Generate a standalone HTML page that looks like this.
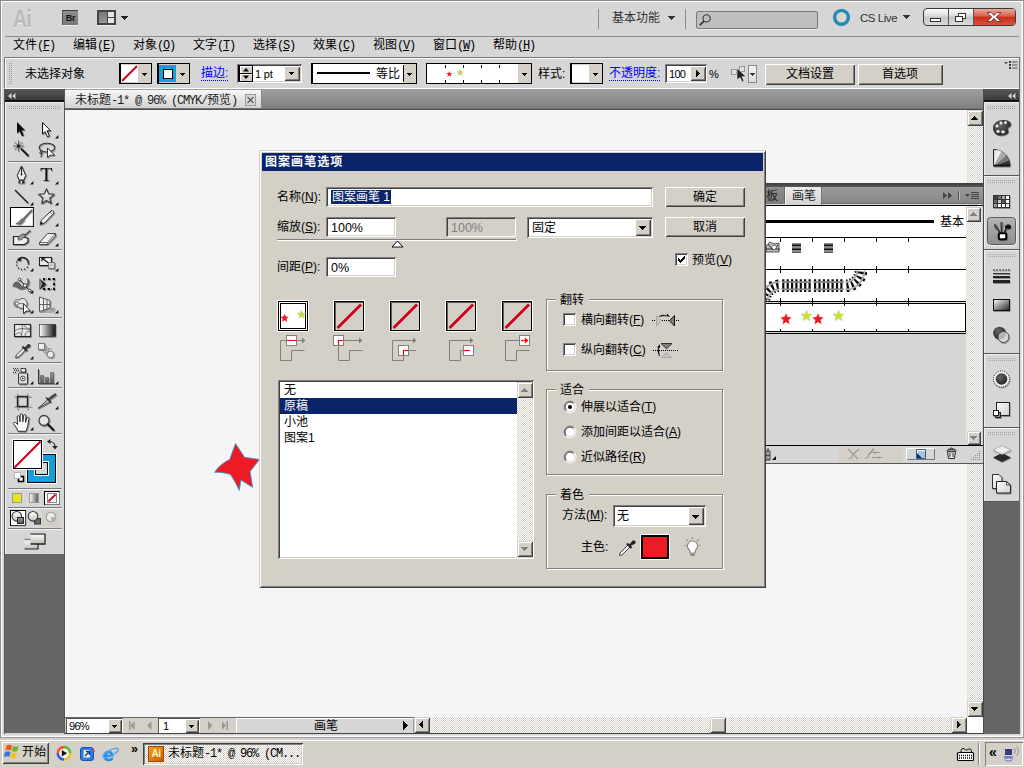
<!DOCTYPE html>
<html lang="zh"><head><meta charset="utf-8"><title>Adobe Illustrator</title>
<style>
*{box-sizing:border-box;margin:0;padding:0}
html,body{width:1024px;height:768px;overflow:hidden}
body{position:relative;background:#d6d6d6;font-family:"Liberation Sans","Noto Sans CJK SC",sans-serif;font-size:12px;color:#000}
div,svg.a{position:absolute}
.t{white-space:nowrap;height:12px;line-height:12px;font-size:12px;font-family:"Liberation Sans","Noto Sans CJK SC",sans-serif}
.t u{text-decoration:underline;text-underline-offset:1px}
.m{font-family:"Liberation Mono","Noto Sans CJK SC",monospace;font-size:12px;letter-spacing:-1.2px}
.b{font-weight:bold}
.lnk{color:#00f;border-bottom:1px dotted #00f;height:14px}
.face{background:#d4d0c8}
.btn{background:#d4d0c8;box-shadow:inset 1px 1px #fff,inset -1px -1px #404040,inset 2px 2px #d4d0c8,inset -2px -2px #808080}
.sbtn{background:#d4d0c8;box-shadow:inset 1px 1px #d4d0c8,inset -1px -1px #404040,inset 2px 2px #fff,inset -2px -2px #808080}
.sunk{background:#fff;box-shadow:inset 1px 1px #808080,inset -1px -1px #fff,inset 2px 2px #404040,inset -2px -2px #d4d0c8}
.chk{background:conic-gradient(#fff 25%,#d4d0c8 0 50%,#fff 0 75%,#d4d0c8 0) 0 0/2px 2px}
.grp{border:1px solid #808080;box-shadow:inset 1px 1px #fff,1px 1px #fff}
</style></head>
<body>
<!-- sec_frame -->
<div style="left:0px;top:0px;width:1024px;height:738px;border:1px solid #8c8c8c;border-right-color:#9a9a9a;border-bottom-color:#9a9a9a;box-shadow:inset 1px 1px #fff,inset -1px -1px #fff,inset -2px -2px #e4e4e4"></div>
<div style="left:13px;top:5px;font-size:23.5px;font-weight:bold;line-height:28px;height:28px;color:#bbb;-webkit-text-stroke:.4px #bbb;text-shadow:0 1px 0 #fff;transform:scaleX(.82);transform-origin:0 0;letter-spacing:-.5px">Ai</div>
<div style="left:62px;top:10px;width:16px;height:15px;background:linear-gradient(#8e8e8e,#787878);border-top:1px solid #3c3c3c;border-left:1px solid #555;box-shadow:0 1px #eee;font-size:9px;font-weight:bold;line-height:14px;text-align:center;color:#111;letter-spacing:-.3px">Br</div>
<div style="left:97px;top:10px;width:19px;height:15px;background:#444;box-shadow:0 1px #eee"></div>
<div style="left:99px;top:12px;width:8px;height:11px;background:linear-gradient(#777,#999)"></div>
<div style="left:108px;top:12px;width:6px;height:5px;background:#e6e6e6"></div>
<div style="left:108px;top:18px;width:6px;height:5px;background:#e6e6e6"></div>
<svg class="a" style="left:121px;top:16px" width="7" height="4" shape-rendering="crispEdges"><path d="M0 0h7v1h-7zM1 1h5v1h-5zM2 2h3v1h-3zM3 3h1v1h-1z" fill="#222"/></svg>
<div style="left:598px;top:9px;width:1px;height:20px;background:#8a8a8a"></div>
<div style="left:685px;top:9px;width:1px;height:20px;background:#8a8a8a"></div>
<div class="t" style="left:612px;top:12px;color:#333" aria-label="基本功能">基本功能</div>
<svg class="a" style="left:668px;top:16px" width="7" height="4" shape-rendering="crispEdges"><path d="M0 0h7v1h-7zM1 1h5v1h-5zM2 2h3v1h-3zM3 3h1v1h-1z" fill="#333"/></svg>
<div style="left:696px;top:11px;width:122px;height:18px;background:#bfbfbf;border:1px solid #7a7a7a;border-radius:2px;box-shadow:0 1px #eee"></div>
<svg class="a" style="left:698px;top:13px" width="16" height="14" viewBox="0 0 16 14"><circle cx="8.6" cy="5.4" r="3.6" fill="none" stroke="#333" stroke-width="1.1"/><path d="M6 8.2L1.8 12.2" stroke="#333" stroke-width="1.6"/></svg>
<svg class="a" style="left:832px;top:8px" width="20" height="20" viewBox="0 0 20 20"><circle cx="9.5" cy="9.3" r="6.9" fill="none" stroke="#2489b4" stroke-width="3.4"/></svg>
<div class="t" style="left:860px;top:12px;color:#333;font-size:11.5px;letter-spacing:-.45px">CS Live</div>
<svg class="a" style="left:903px;top:15px" width="7" height="4" shape-rendering="crispEdges"><path d="M0 0h7v1h-7zM1 1h5v1h-5zM2 2h3v1h-3zM3 3h1v1h-1z" fill="#333"/></svg>
<div style="left:923px;top:8px;width:93px;height:18px;border:1px solid #3a3a3a;border-radius:4px;background:linear-gradient(#fdfdfd,#d9d9d9 45%,#c4c4c4 50%,#dcdcdc);overflow:hidden"><div style="left:24px;top:0;width:1px;height:16px;background:#555"></div><div style="left:49px;top:0;width:1px;height:16px;background:#555"></div><div style="left:50px;top:0;width:41px;height:16px;background:linear-gradient(#e8a89c,#d9604c 45%,#c4301c 50%,#d9503c)"></div></div>
<svg class="a" style="left:923px;top:8px" width="93" height="18" viewBox="0 0 93 18"><rect x="7.5" y="10.5" width="10" height="3" fill="#fff" stroke="#333"/><rect x="35.5" y="5.5" width="7" height="5" fill="#fff" stroke="#333"/><rect x="32.500" y="8.5" width="7" height="5" fill="#fff" stroke="#333"/><path d="M64 4.500h4l3 3 3-3h4l-4.800 4.500 4.800 4.500h-4l-3-3-3 3h-4l4.800-4.500z" fill="#fff" stroke="#5a2018" stroke-width=".8"/></svg>
<div style="left:5px;top:36px;width:1014px;height:1px;background:#8c8c8c"></div>
<div class="t" style="left:13px;top:39px;" aria-label="文件(F)">文件<span class="m">(<u>F</u>)</span></div>
<div class="t" style="left:73px;top:39px;" aria-label="编辑(E)">编辑<span class="m">(<u>E</u>)</span></div>
<div class="t" style="left:133px;top:39px;" aria-label="对象(O)">对象<span class="m">(<u>O</u>)</span></div>
<div class="t" style="left:193px;top:39px;" aria-label="文字(T)">文字<span class="m">(<u>T</u>)</span></div>
<div class="t" style="left:253px;top:39px;" aria-label="选择(S)">选择<span class="m">(<u>S</u>)</span></div>
<div class="t" style="left:313px;top:39px;" aria-label="效果(C)">效果<span class="m">(<u>C</u>)</span></div>
<div class="t" style="left:373px;top:39px;" aria-label="视图(V)">视图<span class="m">(<u>V</u>)</span></div>
<div class="t" style="left:433px;top:39px;" aria-label="窗口(W)">窗口<span class="m">(<u>W</u>)</span></div>
<div class="t" style="left:493px;top:39px;" aria-label="帮助(H)">帮助<span class="m">(<u>H</u>)</span></div>
<div style="left:4px;top:57px;width:1016px;height:32px;border:1px solid #777;border-bottom-color:#fff;box-shadow:inset 1px 1px #fff"></div>
<div style="left:8px;top:63px;width:4px;height:22px;background:conic-gradient(#9a9a9a 25%,transparent 0) 0 0/2px 2px"></div>
<div class="t" style="left:25px;top:68px;" aria-label="未选择对象">未选择对象</div>
<div style="left:119px;top:63px;width:33px;height:21px;background:#d4d0c8;border:1px solid #000;border-left-width:2px"><div style="left:0;top:1px;width:17px;height:17px;background:#fff"></div><svg class="a" style="left:0;top:1px" width="17" height="17"><path d="M1 16L16 1" stroke="#d0021b" stroke-width="2"/></svg></div>
<svg class="a" style="left:142px;top:73px" width="5" height="3" shape-rendering="crispEdges"><path d="M0 0h5v1h-5zM1 1h3v1h-3zM2 2h1v1h-1z" fill="#000"/></svg>
<div style="left:157px;top:63px;width:33px;height:21px;background:#d4d0c8;border:1px solid #000;border-left-width:2px"><div style="left:0;top:1px;width:17px;height:17px;background:#189fdb"></div><div style="left:4px;top:5px;width:10px;height:10px;background:#fff;border:1.5px solid #000"></div></div>
<svg class="a" style="left:180px;top:73px" width="5" height="3" shape-rendering="crispEdges"><path d="M0 0h5v1h-5zM1 1h3v1h-3zM2 2h1v1h-1z" fill="#000"/></svg>
<div class="t lnk" style="left:201px;top:67px;" aria-label="描边:">描边:</div>
<div class="sunk" style="left:237px;top:64px;width:65px;height:19px;"></div>
<div style="left:238px;top:65px;width:15px;height:17px;background:#000"></div>
<div style="left:240px;top:66px;width:12px;height:7px;background:#d4d0c8;box-shadow:inset 1px 1px #fff"></div>
<div style="left:240px;top:74px;width:12px;height:7px;background:#d4d0c8;box-shadow:inset 1px 1px #fff"></div>
<svg class="a" style="left:240px;top:66px" width="12" height="15"><path d="M3 5.500L6 2l3 3.500zM3 9.500L6 13l3-3.500z" fill="#000"/></svg>
<div class="t" style="left:255px;top:68px;font-size:11px;letter-spacing:-.2px">1 pt</div>
<div class="btn" style="left:284px;top:66px;width:16px;height:15px;"></div>
<svg class="a" style="left:289px;top:72px" width="5" height="3" shape-rendering="crispEdges"><path d="M0 0h5v1h-5zM1 1h3v1h-3zM2 2h1v1h-1z" fill="#000"/></svg>
<div style="left:311px;top:63px;width:106px;height:21px;background:#fff;border:1px solid #000;border-left-width:2px"></div>
<div style="left:317px;top:72px;width:53px;height:2px;background:#000"></div>
<div class="t" style="left:376px;top:68px;" aria-label="等比">等比</div>
<div style="left:403px;top:65px;width:1px;height:17px;background:#000"></div>
<div class="face" style="left:404px;top:64px;width:12px;height:19px;"></div>
<svg class="a" style="left:407px;top:73px" width="5" height="3" shape-rendering="crispEdges"><path d="M0 0h5v1h-5zM1 1h3v1h-3zM2 2h1v1h-1z" fill="#000"/></svg>
<div style="left:426px;top:63px;width:106px;height:21px;background:#fff;border:1px solid #000"></div>
<div style="left:445px;top:65px;width:1px;height:3px;background:#000"></div>
<div style="left:445px;top:80px;width:1px;height:3px;background:#000"></div>
<div style="left:463px;top:65px;width:1px;height:3px;background:#000"></div>
<div style="left:463px;top:80px;width:1px;height:3px;background:#000"></div>
<div style="left:481px;top:65px;width:1px;height:3px;background:#000"></div>
<div style="left:481px;top:80px;width:1px;height:3px;background:#000"></div>
<div style="left:499px;top:65px;width:1px;height:3px;background:#000"></div>
<div style="left:499px;top:80px;width:1px;height:3px;background:#000"></div>
<div class="face" style="left:518px;top:64px;width:13px;height:19px;"></div>
<svg class="a" style="left:522px;top:73px" width="5" height="3" shape-rendering="crispEdges"><path d="M0 0h5v1h-5zM1 1h3v1h-3zM2 2h1v1h-1z" fill="#000"/></svg>
<svg class="a" style="left:444px;top:69px" width="11" height="11"><polygon points="5.3,2.0 6.1,4.0 8.3,4.2 6.7,5.6 7.2,7.8 5.3,6.6 3.4,7.8 3.9,5.6 2.3,4.2 4.5,4.0" fill="#e8222a"/></svg>
<svg class="a" style="left:455px;top:67px" width="11" height="11"><polygon points="5.2,2.6 6.0,4.6 8.2,4.8 6.6,6.2 7.1,8.4 5.2,7.2 3.3,8.4 3.8,6.2 2.2,4.8 4.4,4.6" fill="#cfd82a" stroke="#9cc8b0" stroke-width=".5"/></svg>
<div class="t" style="left:538px;top:68px;" aria-label="样式:">样式:</div>
<div style="left:570px;top:63px;width:33px;height:21px;background:#d4d0c8;border:1px solid #000;border-left-width:2px"><div style="left:0;top:1px;width:17px;height:17px;background:#fff"></div></div>
<svg class="a" style="left:593px;top:73px" width="5" height="3" shape-rendering="crispEdges"><path d="M0 0h5v1h-5zM1 1h3v1h-3zM2 2h1v1h-1z" fill="#000"/></svg>
<div class="t lnk" style="left:609px;top:67px;" aria-label="不透明度:">不透明度:</div>
<div class="sunk" style="left:665px;top:64px;width:42px;height:19px;"></div>
<div class="t" style="left:669px;top:68px;font-size:11px;letter-spacing:-.7px">100</div>
<div class="btn" style="left:690px;top:66px;width:16px;height:15px;"></div>
<svg class="a" style="left:696px;top:70px" width="4" height="7" shape-rendering="crispEdges"><path d="M0 0v7h1v-7zM1 1v5h1v-5zM2 2v3h1v-3zM3 3v1h1v-1z" fill="#000"/></svg>
<div class="t" style="left:709px;top:68px;font-size:11px">%</div>
<svg class="a" style="left:730px;top:64px" width="18" height="20" viewBox="0 0 18 20"><rect x="1.500" y="5.500" width="5" height="5" fill="#e4e0d8" stroke="#555" stroke-dasharray="1 1"/><rect x="9.500" y="2.500" width="5" height="5" fill="#e4e0d8" stroke="#555" stroke-dasharray="1 1"/><path d="M7 4v12l3-2.500 2 4.500 2-1-2-4.300h4z" fill="#222" stroke="#eee" stroke-width=".6"/></svg>
<div style="left:748px;top:65px;width:9px;height:18px;background:linear-gradient(#f4f4f4,#dcdcdc);border:1px solid #8a8a8a"></div>
<svg class="a" style="left:750px;top:73px" width="5" height="3" shape-rendering="crispEdges"><path d="M0 0h5v1h-5zM1 1h3v1h-3zM2 2h1v1h-1z" fill="#333"/></svg>
<div class="btn" style="left:765px;top:64px;width:90px;height:21px;"></div>
<div class="t" style="left:786px;top:68px;" aria-label="文档设置">文档设置</div>
<div class="btn" style="left:858px;top:64px;width:85px;height:21px;"></div>
<div class="t" style="left:882px;top:68px;" aria-label="首选项">首选项</div>
<svg class="a" style="left:1002px;top:60px" width="16" height="10" viewBox="0 0 16 10"><path d="M2 2h4L4 4.500z" fill="#555"/><path d="M7 1h2v2h-2zM7 4h2v2h-2zM7 7h2v2h-2z" fill="#3a3a3a"/><path d="M10 2h5.500M10 5h5.500M10 8h5.500" stroke="#555" stroke-width="1.200"/></svg>
<div style="left:65px;top:89px;width:918px;height:19px;background:linear-gradient(#a0a0a0,#808080)"></div>
<div style="left:65px;top:108px;width:918px;height:2px;background:linear-gradient(#707070 50%,#505050 0)"></div>
<div style="left:65px;top:90px;width:197px;height:18px;background:linear-gradient(#f6f6f6,#d2d2d2);border-right:1px solid #8a8a8a"></div>
<div class="t" style="left:75px;top:94px;color:#222" aria-label="未标题-1* @ 96% (CMYK/预览)">未标题<span class="m">-1* @ 96% (CMYK/</span>预览<span class="m">)</span></div>
<div style="left:245px;top:94px;width:11px;height:12px;background:#d8d8d8;border:1px solid #9a9a9a"><svg class="a" style="left:0;top:0" width="9" height="10"><path d="M1.500 2l6 6M7.500 2l-6 6" stroke="#555" stroke-width="1.100"/></svg></div>
<div style="left:65px;top:110px;width:902px;height:607px;background:#f5f5f5"></div>
<div style="left:64px;top:89px;width:1px;height:645px;background:#555"></div>
<svg class="a" style="left:210px;top:438px" width="56" height="58" viewBox="210 438 56 58"><path d="M235.500 443.500L244.600 457.300C249 458 254 458.500 259.500 459.500L250.100 471.500L252.700 487.400L241 480.100L239.200 490.600C238 488 237 485 230.500 474.600C226 473 220 472 214.600 472.400C218 467 224 462 229.600 459.600Z" fill="#ed1c24" stroke="#2a9fd8" stroke-width=".8" stroke-linejoin="round"/></svg>
<div class="chk" style="left:967px;top:110px;width:16px;height:607px;"></div>
<div class="sbtn" style="left:967px;top:110px;width:16px;height:16px;"></div>
<svg class="a" style="left:971px;top:116px" width="7" height="4" shape-rendering="crispEdges"><path d="M0 3h7v1h-7zM1 2h5v1h-5zM2 1h3v1h-3zM3 0h1v1h-1z" fill="#000"/></svg>
<div class="sbtn" style="left:967px;top:701px;width:16px;height:16px;"></div>
<svg class="a" style="left:971px;top:707px" width="7" height="4" shape-rendering="crispEdges"><path d="M0 0h7v1h-7zM1 1h5v1h-5zM2 2h3v1h-3zM3 3h1v1h-1z" fill="#000"/></svg>
<div style="left:967px;top:717px;width:16px;height:16px;background:#fff"></div>
<div class="face" style="left:65px;top:717px;width:902px;height:17px;border-top:1px solid #666"></div>
<div style="left:65px;top:733px;width:955px;height:1px;background:#444"></div>
<div class="sunk" style="left:66px;top:718px;width:57px;height:15px;box-shadow:inset 1px 1px #555,inset -1px -1px #fff"></div>
<div class="t" style="left:69px;top:720px;font-size:11px;letter-spacing:-.7px">96%</div>
<div class="btn" style="left:108px;top:719px;width:14px;height:14px;"></div>
<svg class="a" style="left:112px;top:725px" width="5" height="3" shape-rendering="crispEdges"><path d="M0 0h5v1h-5zM1 1h3v1h-3zM2 2h1v1h-1z" fill="#000"/></svg>
<svg class="a" style="left:124px;top:718px" width="112" height="15" viewBox="0 0 112 15"><path d="M5 3h1.500v9h-1.500zM10.500 3v9l-4-4.500zM27.500 3v9l-4.500-4.500z" fill="#999"/><path d="M84 3v9l4.500-4.500zM98 3v9l4-4.500zM102.500 3h1.500v9h-1.500z" fill="#999"/></svg>
<div class="sunk" style="left:158px;top:718px;width:42px;height:15px;box-shadow:inset 1px 1px #555,inset -1px -1px #fff"></div>
<div class="t" style="left:163px;top:720px;font-size:11px">1</div>
<div class="btn" style="left:185px;top:719px;width:14px;height:14px;"></div>
<svg class="a" style="left:189px;top:725px" width="5" height="3" shape-rendering="crispEdges"><path d="M0 0h5v1h-5zM1 1h3v1h-3zM2 2h1v1h-1z" fill="#000"/></svg>
<div style="left:236px;top:718px;width:178px;height:15px;background:#d6d6d6;box-shadow:inset 1px 1px #fff,inset -1px 0 #999"></div>
<div class="t" style="left:314px;top:720px;" aria-label="画笔">画笔</div>
<svg class="a" style="left:403px;top:721px" width="5" height="9" shape-rendering="crispEdges"><path d="M0 0v9h1v-9zM1 1v7h1v-7zM2 2v5h1v-5zM3 3v3h1v-3zM4 4v1h1v-1z" fill="#000"/></svg>
<div class="chk" style="left:414px;top:717px;width:553px;height:16px;"></div>
<div class="sbtn" style="left:414px;top:717px;width:16px;height:16px;"></div>
<svg class="a" style="left:419px;top:721px" width="4" height="7" shape-rendering="crispEdges"><path d="M3 0v7h1v-7zM2 1v5h1v-5zM1 2v3h1v-3zM0 3v1h1v-1z" fill="#000"/></svg>
<div class="sbtn" style="left:710px;top:717px;width:16px;height:16px;"></div>
<div class="sbtn" style="left:951px;top:717px;width:16px;height:16px;"></div>
<svg class="a" style="left:957px;top:721px" width="4" height="7" shape-rendering="crispEdges"><path d="M0 0v7h1v-7zM1 1v5h1v-5zM2 2v3h1v-3zM3 3v1h1v-1z" fill="#000"/></svg>
<!-- sec_toolbox -->
<div style="left:4px;top:89px;width:60px;height:13px;background:linear-gradient(#585858,#3a3a3a 85%,#111 86%)"></div>
<div style="left:4px;top:89px;width:1px;height:645px;background:#555"></div>
<div style="left:5px;top:102px;width:59px;height:452px;background:#d6d6d6;box-shadow:inset 1px 1px #f2f2f2"></div>
<div style="left:5px;top:554px;width:59px;height:179px;background:#666"></div>
<div style="left:8px;top:106px;width:53px;height:3px;background:conic-gradient(#a2a2a2 25%,transparent 0) 0 0/2px 2px"></div>
<div style="left:8px;top:161px;width:54px;height:2px;background:linear-gradient(#7a7a7a 50%,#f4f4f4 0)"></div>
<div style="left:8px;top:249px;width:54px;height:2px;background:linear-gradient(#7a7a7a 50%,#f4f4f4 0)"></div>
<div style="left:8px;top:317px;width:54px;height:2px;background:linear-gradient(#7a7a7a 50%,#f4f4f4 0)"></div>
<div style="left:8px;top:362px;width:54px;height:2px;background:linear-gradient(#7a7a7a 50%,#f4f4f4 0)"></div>
<div style="left:8px;top:387px;width:54px;height:2px;background:linear-gradient(#7a7a7a 50%,#f4f4f4 0)"></div>
<div style="left:8px;top:433px;width:54px;height:2px;background:linear-gradient(#7a7a7a 50%,#f4f4f4 0)"></div>
<div style="left:8px;top:488px;width:54px;height:2px;background:linear-gradient(#7a7a7a 50%,#f4f4f4 0)"></div>
<div style="left:8px;top:507px;width:54px;height:2px;background:linear-gradient(#7a7a7a 50%,#f4f4f4 0)"></div>
<div style="left:8px;top:528px;width:54px;height:2px;background:linear-gradient(#7a7a7a 50%,#f4f4f4 0)"></div>
<svg class="a" style="left:0;top:0" width="70" height="560" viewBox="0 0 70 560">
<defs><linearGradient id="lgv" x1="0" y1="0" x2="0" y2="1"><stop offset="0" stop-color="#fff"/><stop offset="1" stop-color="#c4c0b8"/></linearGradient><linearGradient id="lgh" x1="0" y1="0" x2="1" y2="0"><stop offset="0" stop-color="#fff"/><stop offset="1" stop-color="#111"/></linearGradient><linearGradient id="lgb" x1="0" y1="0" x2="0" y2="1"><stop offset="0" stop-color="#999"/><stop offset="1" stop-color="#555"/></linearGradient><filter id="sh" x="-20%" y="-20%" width="150%" height="150%"><feDropShadow dx=".8" dy="1" stdDeviation=".6" flood-color="#000" flood-opacity=".35"/></filter></defs>
<path d="M11.500 93v6l-3.500-3zM15.500 93v6l-3.500-3z" fill="#d0d0d0"/>
<g filter="url(#sh)">
<path d="M17 122v11.500l2.600-2.400 2.300 5.200 2-.9-2.300-5.100h3.600z" fill="#111"/>
<path d="M42.5 122.5v11.500l2.600-2.400 2.300 5.200 2-.9-2.300-5.100h3.600z" fill="#fff" stroke="#111" stroke-width="1"/>
<path d="M18.500 140.500v11M13 146h11M14.600 142.100l7.800 7.800M22.400 142.100l-7.800 7.800" stroke="#444" stroke-width=".8"/><circle cx="18.500" cy="146" r="1.600" fill="#222"/><path d="M21 148.500l7.500 7.500" stroke="#1a1a1a" stroke-width="1.800"/>
<ellipse cx="47" cy="147.600" rx="7.800" ry="4.400" fill="none" stroke="#333" stroke-width="1.100"/><path d="M41 151c-1.500 1-1.500 3 0 3s1.500-2 0-2.500c1 2 1 4-.5 5.500" fill="none" stroke="#333" stroke-width="1"/><path d="M47.500 148v9.500l2.600-2.300h4.400z" fill="#fff" stroke="#222" stroke-width=".9"/>
<path d="M21.500 166l4.300 9.500-2 4.500h-4.600l-2-4.500z" fill="#eee" stroke="#222" stroke-width="1"/><path d="M21.500 167v7" stroke="#222" stroke-width="1"/><circle cx="21.500" cy="174.500" r="1" fill="#222"/><path d="M18.500 180.500h6v3h-6z" fill="#333"/><path d="M20.500 181v2.500h1.500v-2.500z" fill="#ddd"/>
<text x="40.300" y="181.300" font-family="Liberation Serif" font-size="19.800" fill="#111">T</text>
<path d="M15 190l13 13" stroke="#1a1a1a" stroke-width="1.300"/>
<polygon points="46.5,188.9 48.7,193.9 54.1,194.4 50.0,198.0 51.2,203.4 46.5,200.6 41.8,203.4 43.0,198.0 38.9,194.4 44.3,193.9" fill="url(#lgv)" stroke="#444" stroke-width="1.300" stroke-linejoin="round"/>
</g>
<rect x="10.500" y="207.500" width="23" height="19" fill="#fff" stroke="#000"/><path d="M11 226h22v-18" fill="none" stroke="#999" stroke-width=".6"/>
<g filter="url(#sh)">
<path d="M31.500 210.500l-8 8.500" stroke="#555" stroke-width="1.800" stroke-linecap="round"/><path d="M23.800 218.200c-1.500 0-3 1-4 2.500s-2.500 2.500-4 2.800c2 1.200 5 1 6.800-.8s2-3 1.200-4.500z" fill="#777" stroke="#555" stroke-width=".6"/>
<path d="M40 224.500l1.500-4.500 9.500-9c1.500-1 3.500.5 2.800 2.300l-9.300 9.700z" fill="#eee" stroke="#333" stroke-width="1"/><path d="M40 224.500l1-3 2 2z" fill="#111"/><path d="M50 212l2.500 2.500" stroke="#555" stroke-width=".8"/>
<path d="M13.500 236.500h9l5.500 2v3.500l-3.500 2.500h-11z" fill="#eee" stroke="#222" stroke-width="1.200"/><path d="M30.500 230.500l-6 5" stroke="#444" stroke-width="1.300"/><ellipse cx="21.500" cy="237" rx="4.200" ry="2" transform="rotate(-35 21.500 237)" fill="#999" stroke="#444" stroke-width=".8"/>
<path d="M39.500 242.500l8-9h8v2.500l-8 8.500h-8z" fill="#f0f0f0" stroke="#444" stroke-width="1" stroke-linejoin="round"/><path d="M39.500 242.500h8l8-9M47.500 242.500v2" fill="none" stroke="#444" stroke-width=".8"/>
<circle cx="22.500" cy="263.500" r="6" fill="none" stroke="#222" stroke-width="1.300" stroke-dasharray="1.200 2"/><path d="M18.500 259a6 6 0 0 1 10 4" fill="none" stroke="#222" stroke-width="1.400"/><path d="M16.500 260.500l4.500-3.500v4z" fill="#222"/>
<rect x="39.500" y="257.500" width="12" height="8" fill="#eee" stroke="#222" stroke-width="1.100"/><path d="M49 263.500l-6.500-5M42 258v3.500M42 258h3.500" stroke="#111" stroke-width="1.100" fill="none"/><rect x="48.500" y="262.500" width="6" height="6" fill="#ddd" fill-opacity=".8" stroke="#777" stroke-width="1"/>
<path d="M13 285c2-4 5-4 7-1s5 4 7 0c1-2 1-4 0-5.500c3 1 3 6 0 8.500s-6 3-9 1-4-2-5-1.500z" fill="#666" stroke="#555" stroke-width=".5"/><path d="M19.500 279.500l10.500 11.500" stroke="#222" stroke-width="1"/><circle cx="19.500" cy="279.500" r="1.300" fill="#fff" stroke="#222" stroke-width=".8"/><circle cx="25" cy="285.500" r="1.700" fill="#fff" stroke="#222" stroke-width=".8"/><circle cx="29.800" cy="290.500" r="1.300" fill="#fff" stroke="#222" stroke-width=".8"/>
<path d="M39.500 278.500v11l7-5z" fill="#222"/><path d="M39.500 278.500v11l3-5.500z" fill="#888"/><rect x="44" y="279" width="10" height="10" fill="none" stroke="#222" stroke-width=".8" stroke-dasharray="1 1"/><path d="M43 278h2v2h-2zM48 278h2v2h-2zM53 278h2v2h-2zM53 283h2v2h-2zM43 288h2v2h-2zM48 288h2v2h-2zM53 288h2v2h-2z" fill="#111"/>
<path d="M14 303.500c0-3 3-4.500 5.500-3.500 1.500-2.500 6.500-2 7 1.500 1.500 2 .5 5-2 5.500-2 2-5.500 1.500-6.500-.5-2.500.5-4-1-4-3z" fill="#e2e2e2" stroke="#555" stroke-width="1"/><circle cx="17" cy="303.500" r="1.700" fill="#fff" stroke="#333" stroke-width=".8"/><path d="M19.500 303.500h3" stroke="#222" stroke-width="1" stroke-dasharray="1 1"/><path d="M23.500 303.500v10l2.600-2.400h4.400z" fill="#fff" stroke="#222" stroke-width=".9"/>
<path d="M39.500 297l10.500 3.500v7.500l-10.500 3.500z" fill="#eee" stroke="#555" stroke-width="1"/><path d="M43.500 298.500v11.500M47 299.500v9.500M39.500 304.500h10.500" stroke="#555" stroke-width=".9"/><path d="M39.500 311.500l14.500-.5M50 308l5 .5M50 309.500l4.500.5" stroke="#888" stroke-width=".8"/>
<rect x="14.500" y="324.500" width="16" height="12" fill="#e8e8e8" stroke="#222" stroke-width="1.100"/><path d="M14.500 331c4-3 8-3 16-1M22 324.500c1 4 0 8-1 12M15 335c3-3 5-3 7 0M24 325c1 3 4 4 6.500 3M25 336c0-3 2-5 5.500-5" fill="none" stroke="#444" stroke-width=".7"/>
<rect x="39.500" y="324.500" width="16" height="12" fill="url(#lgh)" stroke="#222" stroke-width=".6"/>
<path d="M15.500 357.500l1-2.500 8-8 2 2-8 8z" fill="#eee" stroke="#333" stroke-width=".9"/><path d="M22.500 346.500l4.500 4.500" stroke="#333" stroke-width="2.200"/><path d="M25 348.500l3-3.500c1-1 2.500.5 1.500 1.500z" fill="#333" stroke="#333" stroke-width="1.400"/>
<rect x="38.500" y="343.500" width="6" height="6" fill="#eee" stroke="#777" stroke-width="1"/><path d="M46 346h1v1h-1zM48 348h1v1h-1zM46 348h1v1h-1zM44 350h1v1h-1zM46 350h1v1h-1zM42 350h1v1h-1zM44 352h1v1h-1zM46 352h1v1h-1zM48 350h1v1h-1zM50 348h1v1h-1zM46 354h1v1h-1z" fill="#777"/><circle cx="50.500" cy="354.500" r="3.300" fill="#eee" stroke="#777" stroke-width="1"/>
<rect x="18.500" y="373" width="9" height="11" rx="1" fill="#ddd" stroke="#333" stroke-width="1"/><rect x="21" y="368.500" width="4.500" height="3.500" fill="#eee" stroke="#333" stroke-width=".9"/><circle cx="22.800" cy="378.500" r="2.400" fill="#fff" stroke="#333" stroke-width=".9"/><circle cx="22.800" cy="378.500" r=".9" fill="#333"/><path d="M13 368h1v1h-1zM15 368h1v1h-1zM17 368h1v1h-1zM14 370h1v1h-1zM16 370h1v1h-1zM18 370h1v1h-1zM13 372h1v1h-1zM15 372h1v1h-1z" fill="#333"/>
<path d="M38.500 369v14.500h16" fill="none" stroke="#333" stroke-width="1"/><path d="M40.500 375.500h3v8h-3zM45.500 377.500h3v6h-3zM50.500 372.500h3v11h-3z" fill="url(#lgb)" stroke="#555" stroke-width=".6"/>
<path d="M14 396.500h17.500M14 406.500h17.500M17.500 393v17M27.500 393v17" stroke="#aaa" stroke-width=".8"/><rect x="17.500" y="396.500" width="10" height="10" fill="none" stroke="#222" stroke-width="1.400"/>
<path d="M38 408.500l10.500-9.500 2.200 2.500z" fill="#ccc" stroke="#333" stroke-width=".9"/><path d="M48.500 399.500l7.500-5.500" stroke="#444" stroke-width="2.600"/><path d="M46 397.500l5 5" stroke="#222" stroke-width="1.300"/>
<path transform="translate(0 -1.200)" d="M18 432.500C17 429.500 15.500 427.500 13.800 425.500C12.800 424.200 14.300 422.800 15.600 423.800L17.600 425.600L17.200 418.200C17.100 416.600 19.300 416.400 19.500 418L20 423L20.200 416C20.200 414.400 22.500 414.400 22.600 416L22.800 423L23.600 416.800C23.800 415.300 26 415.500 25.900 417.100L25.500 423.600L26.800 419.300C27.300 417.900 29.300 418.400 29 419.900L27.800 426.500C27.400 429 26.600 430.800 25.800 432.500Z" fill="#f8f8f8" stroke="#333" stroke-width="1" stroke-linejoin="round"/>
<circle cx="44" cy="420.500" r="5" fill="#e6e6e6" stroke="#444" stroke-width="1.300"/><path d="M47.800 424.300l5.700 5.700" stroke="#1a1a1a" stroke-width="2.200" stroke-linecap="round"/>
</g>
<path d="M58.400 135v3.400h-3.400z" fill="#111"/><path d="M33.400 181v3.400h-3.400z" fill="#111"/><path d="M58.400 181v3.400h-3.400z" fill="#111"/><path d="M33.400 202v3.400h-3.400z" fill="#111"/><path d="M58.400 202v3.400h-3.400z" fill="#111"/><path d="M58.400 223v3.400h-3.400z" fill="#111"/><path d="M58.400 243v3.400h-3.400z" fill="#111"/><path d="M33.400 268v3.400h-3.400z" fill="#111"/><path d="M58.400 268v3.400h-3.400z" fill="#111"/><path d="M33.400 290v3.400h-3.400z" fill="#111"/><path d="M33.400 310v3.400h-3.400z" fill="#111"/><path d="M58.400 310v3.400h-3.400z" fill="#111"/><path d="M33.400 356v3.400h-3.400z" fill="#111"/><path d="M33.400 381v3.400h-3.400z" fill="#111"/><path d="M58.400 381v3.400h-3.400z" fill="#111"/><path d="M58.400 406v3.400h-3.400z" fill="#111"/><path d="M33.400 427v3.400h-3.400z" fill="#111"/>
<rect x="26" y="453" width="31" height="31" fill="#fff"/><rect x="27.500" y="454.500" width="28" height="28" fill="#189fdb" stroke="#000"/><rect x="34" y="461" width="15" height="15" fill="#fff"/><rect x="35.500" y="462.500" width="12" height="12" fill="#d6d6d6" stroke="#000"/>
<rect x="12" y="439" width="31" height="31" fill="#fff"/><rect x="13.500" y="440.500" width="28" height="28" fill="#fff" stroke="#000"/><path d="M14.500 467.500l26-26" stroke="#d0021b" stroke-width="2"/>
<rect x="18.500" y="476.500" width="5" height="5" fill="#fff" stroke="#000" stroke-width="1.600"/><rect x="14.500" y="472.500" width="6" height="6" fill="#fff" stroke="#aaa" stroke-width=".8"/>
<path d="M49.500 441.500c3 0 5.500 2 5.500 5" fill="none" stroke="#222" stroke-width="1.200"/><path d="M47 441.500l3.500-2.500v5zM55 449.500l-2.800-3.500h5.600z" fill="#222"/>
<rect x="12.500" y="493.500" width="9" height="9" fill="#e6e619" stroke="#999"/><rect x="29.500" y="493.500" width="9" height="9" fill="url(#lgh2)" stroke="#999"/><defs><linearGradient id="lgh2"><stop offset="0" stop-color="#fff"/><stop offset="1" stop-color="#555"/></linearGradient></defs><rect x="44.500" y="491.500" width="15" height="13" fill="#fff" stroke="#000"/><path d="M45 504.500h14.500v-13" fill="none" stroke="#999" stroke-width=".8"/><rect x="47.500" y="493.500" width="9" height="9" fill="#fff" stroke="#888"/><path d="M48.500 501.500l7-7" stroke="#d0021b" stroke-width="1.800"/>
<rect x="42" y="510" width="18" height="17" fill="#d4d0c8"/><rect x="10.500" y="510.500" width="15" height="15" fill="#fff" stroke="#000"/><path d="M11 526h15v-15" fill="none" stroke="#999" stroke-width=".8"/><circle cx="16.800" cy="516.300" r="4.800" fill="url(#lgv)" stroke="#333" stroke-width="1.100"/><rect x="17.500" y="517.500" width="6" height="6" fill="url(#lgb)" stroke="#222" stroke-width="1"/><rect x="34.500" y="518.500" width="6" height="5.500" fill="#666" stroke="#333" stroke-width="1"/><circle cx="33" cy="516.300" r="4.800" fill="url(#lgv)" stroke="#333" stroke-width="1.100"/><circle cx="51" cy="517" r="4.800" fill="#eceae4" stroke="#9a9a9a" stroke-width="1.100"/><path d="M51 517h4.800a4.800 4.800 0 0 1-4.800 4.800z" fill="#b4b4b4"/>
<rect x="24.500" y="539.500" width="13" height="9" fill="url(#lgv)"/><path d="M24.500 539.500h13" stroke="#888" stroke-width="1.600"/><path d="M24.500 549h13.500v-5" fill="none" stroke="#222" stroke-width="1.200"/><rect x="30.500" y="534" width="14" height="9.500" fill="url(#lgv)"/><path d="M30.500 534h14" stroke="#777" stroke-width="2"/><path d="M45 533.500v10.500h-14.500" fill="none" stroke="#222" stroke-width="1.300"/>
</svg>
<!-- sec_dock -->
<div style="left:983px;top:89px;width:37px;height:645px;background:#666"></div>
<div style="left:983px;top:89px;width:37px;height:13px;background:linear-gradient(#585858,#3a3a3a 85%,#111 86%)"></div>
<div style="left:983px;top:89px;width:1px;height:645px;background:#4a4a4a"></div>
<div style="left:1019px;top:57px;width:1px;height:677px;background:#6a6a6a"></div>
<div style="left:984px;top:102px;width:35px;height:73px;background:#d6d6d6;box-shadow:inset 1px 1px #f0f0f0"></div>
<div style="left:984px;top:175px;width:35px;height:1px;background:#555"></div>
<div style="left:987px;top:106px;width:28px;height:3px;background:conic-gradient(#a2a2a2 25%,transparent 0) 0 0/2px 2px"></div>
<div style="left:984px;top:176px;width:35px;height:73px;background:#d6d6d6;box-shadow:inset 1px 1px #f0f0f0"></div>
<div style="left:984px;top:249px;width:35px;height:1px;background:#555"></div>
<div style="left:987px;top:180px;width:28px;height:3px;background:conic-gradient(#a2a2a2 25%,transparent 0) 0 0/2px 2px"></div>
<div style="left:984px;top:250px;width:35px;height:103px;background:#d6d6d6;box-shadow:inset 1px 1px #f0f0f0"></div>
<div style="left:984px;top:353px;width:35px;height:1px;background:#555"></div>
<div style="left:987px;top:254px;width:28px;height:3px;background:conic-gradient(#a2a2a2 25%,transparent 0) 0 0/2px 2px"></div>
<div style="left:984px;top:354px;width:35px;height:73px;background:#d6d6d6;box-shadow:inset 1px 1px #f0f0f0"></div>
<div style="left:984px;top:427px;width:35px;height:1px;background:#555"></div>
<div style="left:987px;top:358px;width:28px;height:3px;background:conic-gradient(#a2a2a2 25%,transparent 0) 0 0/2px 2px"></div>
<div style="left:984px;top:428px;width:35px;height:73px;background:#d6d6d6;box-shadow:inset 1px 1px #f0f0f0"></div>
<div style="left:984px;top:501px;width:35px;height:1px;background:#555"></div>
<div style="left:987px;top:432px;width:28px;height:3px;background:conic-gradient(#a2a2a2 25%,transparent 0) 0 0/2px 2px"></div>
<div style="left:987px;top:217px;width:29px;height:28px;background:linear-gradient(#b4b4b4,#8e8e8e);border:1.500px solid #5c5c5c;border-radius:3.500px;box-shadow:0 1px #f0f0f0,1px 0 #e8e8e8"></div>
<svg class="a" style="left:980px;top:85px" width="44" height="420" viewBox="980 85 44 420">
<defs><linearGradient id="dgd" x1="0" y1="0" x2="1" y2="1"><stop offset="0" stop-color="#fff"/><stop offset="1" stop-color="#222"/></linearGradient><linearGradient id="dgv" x1="0" y1="0" x2="1" y2="1"><stop offset="0" stop-color="#fff"/><stop offset="1" stop-color="#ccc"/></linearGradient><radialGradient id="dgr" cx=".4" cy=".35" r=".7"><stop offset="0" stop-color="#666"/><stop offset="1" stop-color="#222"/></radialGradient><filter id="ds" x="-20%" y="-20%" width="150%" height="150%"><feDropShadow dx=".6" dy="1" stdDeviation=".6" flood-color="#000" flood-opacity=".35"/></filter></defs>
<path d="M1015.500 93v6l-3.500-3zM1011.500 93v6l-3.500-3z" fill="#d0d0d0"/>
<g filter="url(#ds)">
<path d="M993 128c0-4.500 4.500-8 10-8s8.500 2 8 5c-.4 2-2.500 2-3 3.500s1.500 2.500 0 4.500-4.500 2.500-8 2.500-7-3-7-7.500z" fill="url(#dgr)"/><circle cx="997" cy="126" r="1.500" fill="#eee"/><circle cx="1001" cy="123" r="1.500" fill="#eee"/><circle cx="1005.500" cy="122.500" r="1.500" fill="#eee"/><ellipse cx="998" cy="131.500" rx="1.700" ry="1.400" fill="#eee"/><ellipse cx="1003" cy="132" rx="1.900" ry="1.400" fill="#eee"/>
<path d="M993.500 149.500v16.500h16.500a16.500 16.500 0 0 0-16.500-16.500z" fill="#ddd" stroke="#222" stroke-width="1"/><path d="M993.500 166l3-16c2 0 4 1 5 1.500z" fill="#eee"/><path d="M993.500 166l8-14.500c2 1 3.500 2.500 4.500 3.500z" fill="#aaa"/><path d="M993.500 166l12.500-10.500c1.500 1.500 2.500 3.500 3 5z" fill="#777"/><path d="M993.500 166l15.500-5.500c.5 1.500 1 3.500 1 5.500z" fill="#333"/><path d="M993.500 165.500h16.500" stroke="#111" stroke-width="1.500"/>
<rect x="993" y="195" width="17" height="13" fill="#333"/><rect x="994" y="196" width="3" height="3" fill="#444"/><rect x="998" y="196" width="3" height="3" fill="#777"/><rect x="1002" y="196" width="3" height="3" fill="#aaa"/><rect x="1006" y="196" width="3" height="3" fill="#fff"/><rect x="994" y="200" width="3" height="3" fill="#666"/><rect x="998" y="200" width="3" height="3" fill="#ccc"/><rect x="1002" y="200" width="3" height="3" fill="#555"/><rect x="1006" y="200" width="3" height="3" fill="#fff"/><rect x="994" y="204" width="3" height="3" fill="#999"/><rect x="998" y="204" width="3" height="3" fill="#fff"/><rect x="1002" y="204" width="3" height="3" fill="#fff"/><rect x="1006" y="204" width="3" height="3" fill="#eee"/>
<rect x="998.800" y="233.300" width="7.400" height="6" rx="1" fill="#fff" stroke="#000" stroke-width="2"/><path d="M1000 232.500l-3-4.500" stroke="#222" stroke-width="1.300"/><path d="M994.300 223.800c1.500.300 3.500 2.500 4 5-.300 1-1.500 1.200-2.300.5-1.500-1.500-2-3.500-1.700-5.500z" fill="#444"/><path d="M1001.500 232.500v-6" stroke="#222" stroke-width="1.200"/><path d="M1000.300 222h2.400v4.500l-1.200 1.200-1.200-1.200z" fill="#555"/><path d="M1004.300 232.500l2-4" stroke="#111" stroke-width="1.300"/><path d="M1005 227.500c-.500-2 2-3.500 4-3s2.800 2.500 1.300 4c-1.500.800-4 .500-5.300-1z" fill="#111"/>
<path d="M993 270h17" stroke="#333" stroke-width="1" stroke-dasharray="2 1"/><path d="M993 273.500h17" stroke="#333" stroke-width="1"/><path d="M993 277h17" stroke="#222" stroke-width="2"/><path d="M993 281.500h17" stroke="#222" stroke-width="3"/>
<rect x="993.500" y="299.500" width="16" height="11" fill="url(#dgd)" stroke="#111" stroke-width="1"/>
<circle cx="999.500" cy="333" r="6.300" fill="url(#dgr)"/><circle cx="1003.500" cy="337" r="5.500" fill="#ddd" fill-opacity=".75" stroke="#444" stroke-width=".9"/>
<circle cx="1001.500" cy="379" r="8" fill="#f4f4f4" stroke="#222" stroke-width="1" stroke-dasharray="1 1"/><circle cx="1001.500" cy="379" r="5.800" fill="url(#dgr)"/>
<rect x="996.500" y="402.500" width="13" height="13" fill="url(#dgv)" stroke="#222" stroke-width="1"/><rect x="995.500" y="412.500" width="5" height="5" fill="#888" stroke="#222"/><rect x="993.500" y="410.500" width="5" height="5" fill="#fff" stroke="#222"/>
<path d="M1002 453l9 4.500-9 4.500-9-4.500z" fill="#2a2a2a"/><path d="M1002 445.500l9 4.500-9 4.500-9-4.500z" fill="#f2f2f2" fill-opacity=".9" stroke="#999" stroke-width=".7"/>
<path d="M992.500 474.500h6.500l3 3v11h-9.500z" fill="url(#dgv)" stroke="#333" stroke-width="1"/><path d="M996.500 481.500h10l4 3.500v8h-14z" fill="url(#dgv)" stroke="#222" stroke-width="1"/><path d="M1006.500 481.500v3.500h4" fill="none" stroke="#222" stroke-width=".8"/>
</g></svg>
<!-- sec_panel -->
<div style="left:766px;top:183px;width:217px;height:4px;background:linear-gradient(#3c3c3c,#585858)"></div>
<div style="left:766px;top:187px;width:217px;height:17px;background:linear-gradient(#9c9c9c,#858585)"></div>
<div style="left:766px;top:203px;width:217px;height:1px;background:#6e6e6e"></div>
<div style="left:766px;top:204px;width:217px;height:1px;background:#d6d6d6"></div>
<div style="left:766px;top:187px;width:19px;height:17px;background:linear-gradient(#8e8e8e,#7c7c7c);border-right:1px solid #6a6a6a"></div>
<div class="t" style="left:766px;top:190px;color:#222" aria-label="板">板</div>
<div style="left:785px;top:187px;width:37px;height:18px;background:linear-gradient(#ececec,#d2d2d2);border-left:1px solid #f4f4f4;border-right:1px solid #777"></div>
<div class="t" style="left:792px;top:190px;color:#222" aria-label="画笔">画笔</div>
<svg class="a" style="left:940px;top:189px" width="42" height="13" viewBox="940 189 42 13"><path d="M943 192v7l4-3.500zM948 192v7l4-3.500z" fill="#444"/><path d="M958.500 191v9" stroke="#555" stroke-width="1"/><path d="M959.500 191v9" stroke="#bbb" stroke-width="1"/><path d="M965 194h5l-2.500 3z" fill="#444"/><path d="M971 192.500h8M971 194.500h8M971 196.500h8M971 198.500h8" stroke="#444" stroke-width="1"/></svg>
<div style="left:766px;top:205px;width:217px;height:241px;background:#d6d6d6;border-top:1px solid #000;border-bottom:1px solid #000"></div>
<div style="left:766px;top:206px;width:200px;height:96px;background:#fff"></div>
<div class="chk" style="left:966px;top:206px;width:16px;height:239px;"></div>
<div class="sbtn" style="left:966px;top:207px;width:15px;height:15px;"></div>
<svg class="a" style="left:970px;top:212px" width="7" height="4" shape-rendering="crispEdges"><path d="M0 3h7v1h-7zM1 2h5v1h-5zM2 1h3v1h-3zM3 0h1v1h-1z" fill="#808080"/></svg>
<div class="sbtn" style="left:967px;top:431px;width:14px;height:14px;"></div>
<svg class="a" style="left:970px;top:436px" width="7" height="4" shape-rendering="crispEdges"><path d="M0 0h7v1h-7zM1 1h5v1h-5zM2 2h3v1h-3zM3 3h1v1h-1z" fill="#808080"/></svg>
<div style="left:766px;top:220px;width:168px;height:3px;background:#000"></div>
<div class="t" style="left:940px;top:216px;" aria-label="基本">基本</div>
<div style="left:766px;top:237px;width:200px;height:1px;background:#000"></div>
<div style="left:766px;top:269px;width:200px;height:1px;background:#000"></div>
<div style="left:766px;top:301px;width:200px;height:1px;background:#000"></div>
<div style="left:780px;top:237px;width:1px;height:5px;background:#000"></div>
<div style="left:812px;top:237px;width:1px;height:5px;background:#000"></div>
<div style="left:844px;top:237px;width:1px;height:5px;background:#000"></div>
<div style="left:876px;top:237px;width:1px;height:5px;background:#000"></div>
<div style="left:908px;top:237px;width:1px;height:5px;background:#000"></div>
<div style="left:780px;top:266px;width:1px;height:7px;background:#000"></div>
<div style="left:812px;top:266px;width:1px;height:7px;background:#000"></div>
<div style="left:844px;top:266px;width:1px;height:7px;background:#000"></div>
<div style="left:876px;top:266px;width:1px;height:7px;background:#000"></div>
<div style="left:908px;top:266px;width:1px;height:7px;background:#000"></div>
<div style="left:780px;top:298px;width:1px;height:7px;background:#000"></div>
<div style="left:812px;top:298px;width:1px;height:7px;background:#000"></div>
<div style="left:844px;top:298px;width:1px;height:7px;background:#000"></div>
<div style="left:876px;top:298px;width:1px;height:7px;background:#000"></div>
<div style="left:908px;top:298px;width:1px;height:7px;background:#000"></div>
<div style="left:792px;top:243px;width:9px;height:10px;background:repeating-linear-gradient(#8a8a8a 0 1px,#555 1px 2px,#111 2px 3px,#8a8a8a 3px 4px)"></div>
<div style="left:824px;top:243px;width:9px;height:10px;background:repeating-linear-gradient(#8a8a8a 0 1px,#555 1px 2px,#111 2px 3px,#8a8a8a 3px 4px)"></div>
<svg class="a" style="left:766px;top:240px" width="15" height="14" viewBox="766 240 15 14"><path d="M766 246l4-4 4 2 5-1v9h-13z" fill="#bbb" stroke="#333" stroke-width=".8"/><path d="M766 249h14M768 244l5 6 5-5" stroke="#222" stroke-width=".9" fill="none"/><path d="M771 247l3-2 3 2-3 3z" fill="#fff" stroke="#333" stroke-width=".6"/></svg>
<svg class="a" style="left:766px;top:268px" width="110" height="36" viewBox="766 268 110 36" fill="none"><path d="M783.3 279.300v12.600M787.700 279.300v12.600M792.100 279.300v12.600M796.400 279.300v12.600M800.800 279.300v12.600M805.200 279.300v12.600M809.600 279.300v12.600M815.100 279.300v12.600M819.500 279.300v12.600M823.900 279.300v12.600M828.200 279.300v12.600M832.600 279.300v12.600M837.000 279.300v12.600M841.400 279.300v12.600" stroke="#0a0a0a" stroke-width="2.200"/><path d="M781.700 282.200h29.600M781.700 289.400h29.600" stroke="#787878" stroke-width="1.700"/><path d="M781.700 282.200h29.600M781.700 289.400h29.600" stroke="#c0c0c0" stroke-width=".400"/><path d="M813.500 282.200h30.100M813.500 289.400h30.100" stroke="#787878" stroke-width="1.700"/><path d="M813.500 282.200h30.100M813.500 289.400h30.100" stroke="#c0c0c0" stroke-width=".400"/><path d="M779.500 285.800A15.500 15.500 0 0 0 764 301.300" stroke="#0a0a0a" stroke-width="12.600" stroke-dasharray="2.200 2.700" stroke-dashoffset="-1"/><path d="M779.500 282.200A19.100 19.100 0 0 0 760.400 301.300M779.500 289.400A11.900 11.900 0 0 0 767.600 301.300" stroke="#909090" stroke-width="1.700"/><path d="M779.500 282.200A19.100 19.100 0 0 0 760.400 301.300M779.500 289.400A11.900 11.900 0 0 0 767.600 301.300" stroke="#e8e8e8" stroke-width=".5"/><path d="M845.500 285.800A15.500 15.500 0 0 0 861 270.300" stroke="#0a0a0a" stroke-width="12.600" stroke-dasharray="2.200 2.700" stroke-dashoffset="-1"/><path d="M845.500 289.400A19.100 19.100 0 0 0 864.600 270.300M845.500 282.200A11.900 11.900 0 0 0 857.400 270.300" stroke="#909090" stroke-width="1.700"/><path d="M845.500 289.400A19.100 19.100 0 0 0 864.600 270.300M845.500 282.200A11.900 11.900 0 0 0 857.400 270.300" stroke="#e8e8e8" stroke-width=".5"/></svg>
<div style="left:765px;top:303px;width:201px;height:29px;background:#fff;border:1px solid #000;border-left:0"></div>
<div style="left:766px;top:333px;width:200px;height:1px;background:#000"></div>
<div style="left:780px;top:303px;width:1px;height:3px;background:#000"></div>
<div style="left:780px;top:329px;width:1px;height:3px;background:#000"></div>
<div style="left:812px;top:303px;width:1px;height:3px;background:#000"></div>
<div style="left:812px;top:329px;width:1px;height:3px;background:#000"></div>
<div style="left:844px;top:303px;width:1px;height:3px;background:#000"></div>
<div style="left:844px;top:329px;width:1px;height:3px;background:#000"></div>
<div style="left:876px;top:303px;width:1px;height:3px;background:#000"></div>
<div style="left:876px;top:329px;width:1px;height:3px;background:#000"></div>
<div style="left:908px;top:303px;width:1px;height:3px;background:#000"></div>
<div style="left:908px;top:329px;width:1px;height:3px;background:#000"></div>
<svg class="a" style="left:778px;top:311px" width="17" height="17"><polygon points="8.0,2.3 9.6,6.1 13.7,6.4 10.6,9.1 11.5,13.2 8.0,11.0 4.500,13.2 5.400,9.1 2.3,6.4 6.4,6.1" fill="#ed1c24"/></svg>
<svg class="a" style="left:810px;top:311px" width="17" height="17"><polygon points="8.0,2.3 9.6,6.1 13.7,6.4 10.6,9.1 11.5,13.2 8.0,11.0 4.500,13.2 5.400,9.1 2.3,6.4 6.4,6.1" fill="#ed1c24"/></svg>
<svg class="a" style="left:798px;top:308px" width="16" height="16"><polygon points="8.5,2.2 10.0,5.9 14.0,6.2 11.0,8.8 11.9,12.7 8.5,10.6 5.1,12.7 6.0,8.8 3.0,6.2 7.0,5.9" fill="#d7df23" stroke="#9fd0a0" stroke-width=".5"/></svg>
<svg class="a" style="left:830px;top:308px" width="16" height="16"><polygon points="8.5,2.2 10.0,5.9 14.0,6.2 11.0,8.8 11.9,12.7 8.5,10.6 5.1,12.7 6.0,8.8 3.0,6.2 7.0,5.9" fill="#d7df23" stroke="#9fd0a0" stroke-width=".5"/></svg>
<div style="left:766px;top:446px;width:217px;height:17px;background:#d6d6d6"></div>
<div style="left:766px;top:463px;width:217px;height:1px;background:#555"></div>
<div class="face" style="left:838px;top:447px;width:64px;height:16px;"></div>
<svg class="a" style="left:764px;top:446px" width="220" height="17" viewBox="764 446 220 17"><path d="M766 451h4v9h-4z" fill="#ddd" stroke="#222" stroke-width=".9"/><path d="M767 448.500h2v2h-2z" fill="#555"/><path d="M766 455.500h4M768 451v9" stroke="#222" stroke-width=".7"/><path d="M776 456v4h-4z" fill="#111"/><path d="M848 449l10 10M859 449l-7 6.500" stroke="#999" stroke-width="1.200"/><path d="M852 455.500c-1.500 1-2.500 3-5 3.500 2 .8 5 0 6-2z" fill="#aaa"/><path d="M874 448.500l-6 7" stroke="#999" stroke-width="1.400"/><path d="M868.500 455c-1.500 1-2.500 3-5 3.500 2 .8 5 0 6-2z" fill="#aaa"/><path d="M870 452.500h10M872 457.500h10M875 451v3M879 456v3" stroke="#999" stroke-width="1"/><path d="M916.500 449.500h9v9h-9z" fill="#fff" stroke="#1c3c6c" stroke-width="1"/><path d="M918 458v-7h7v7z" fill="#a8c4dc"/><path d="M917 453l5 5h-5z" fill="#1c2c5c"/><path d="M947.500 451.500h8l-1 7h-6z" fill="#eee" stroke="#222" stroke-width="1"/><ellipse cx="951.500" cy="450.500" rx="4.500" ry="1.500" fill="#888" stroke="#222" stroke-width=".9"/><path d="M950 453v4M953 453v4" stroke="#333" stroke-width="1"/><path d="M950 449c.5-1.500 2.500-1.500 3 0" fill="none" stroke="#222"/><path d="M979 451h1v1h-1zM977 453h1v1h-1zM979 453h1v1h-1zM975 455h1v1h-1zM977 455h1v1h-1zM979 455h1v1h-1zM973 457h1v1h-1zM975 457h1v1h-1zM977 457h1v1h-1zM979 457h1v1h-1zM971 459h1v1h-1zM973 459h1v1h-1zM975 459h1v1h-1zM977 459h1v1h-1zM979 459h1v1h-1z" fill="#8a8a8a"/></svg>
<div style="left:906px;top:448px;width:29px;height:12px;background:#d6d6d6;box-shadow:inset 1px 1px #fff,inset -1px -1px #777"></div>
<svg class="a" style="left:915px;top:448px" width="12" height="12" viewBox="915 448 12 12"><path d="M916.500 449.500h9v9h-9z" fill="#fff" stroke="#345a8c" stroke-width="1"/><path d="M918 458v-7h7v7z" fill="#a8c4dc"/><path d="M917 453l5 5h-5z" fill="#1c2c5c"/></svg>
<!-- sec_dialog -->
<div class="face" style="left:259px;top:150px;width:507px;height:438px;box-shadow:inset 1px 1px #d4d0c8,inset -1px -1px #404040,inset 2px 2px #fff,inset -2px -2px #808080"></div>
<div style="left:262px;top:153px;width:501px;height:18px;background:#0a246a"></div>
<div class="t b" style="left:265px;top:156px;color:#fff;letter-spacing:1.05px" aria-label="图案画笔选项">图案画笔选项</div>
<div class="t" style="left:277px;top:191px;" aria-label="名称(N):">名称(<u>N</u>):</div>
<div class="sunk" style="left:326px;top:187px;width:327px;height:20px;"></div>
<div style="left:331px;top:190px;width:60px;height:14px;background:#0a246a"></div>
<div class="t" style="left:332px;top:191px;color:#fff" aria-label="图案画笔 1">图案画笔 1</div>
<div class="btn" style="left:665px;top:187px;width:80px;height:20px;"></div>
<div class="t" style="left:693px;top:191px;" aria-label="确定">确定</div>
<div class="t" style="left:277px;top:221px;" aria-label="缩放(S):">缩放(<u>S</u>):</div>
<div class="sunk" style="left:326px;top:217px;width:70px;height:20px;"></div>
<div class="t" style="left:331px;top:222px;font-size:12.5px" aria-label="100%">100%</div>
<div class="sunk" style="left:446px;top:217px;width:70px;height:20px;background:#d4d0c8"></div>
<div class="t" style="left:451px;top:222px;color:#808080;font-size:12.5px" aria-label="100%">100%</div>
<div class="sunk" style="left:527px;top:217px;width:126px;height:21px;"></div>
<div class="btn" style="left:635px;top:219px;width:16px;height:17px;"></div>
<svg class="a" style="left:639px;top:226px" width="7" height="4" shape-rendering="crispEdges"><path d="M0 0h7v1h-7zM1 1h5v1h-5zM2 2h3v1h-3zM3 3h1v1h-1z" fill="#000"/></svg>
<div class="t" style="left:532px;top:222px;" aria-label="固定">固定</div>
<div class="btn" style="left:665px;top:217px;width:80px;height:20px;"></div>
<div class="t" style="left:693px;top:221px;" aria-label="取消">取消</div>
<div style="left:277px;top:239px;width:240px;height:2px;background:linear-gradient(#808080 50%,#fff 0);border-right:1px solid #fff"></div>
<svg class="a" style="left:391px;top:240px" width="13" height="8"><path d="M6.500 1l5.500 6h-11z" fill="#fff" stroke="#000" stroke-width="1"/><path d="M2.500 6.500h8" stroke="#999" stroke-width=".8"/></svg>
<div class="sunk" style="left:675px;top:253px;width:13px;height:13px;"></div>
<svg class="a" style="left:678px;top:256px" width="7" height="7" shape-rendering="crispEdges"><path d="M0 2h1v3h-1zM1 3h1v3h-1zM2 4h1v3h-1zM3 3h1v3h-1zM4 2h1v3h-1zM5 1h1v3h-1zM6 0h1v3h-1z" fill="#000"/></svg>
<div class="t" style="left:692px;top:254px;" aria-label="预览(V)">预览(<u>V</u>)</div>
<div class="t" style="left:277px;top:261px;" aria-label="间距(P):">间距(<u>P</u>):</div>
<div class="sunk" style="left:326px;top:257px;width:70px;height:20px;"></div>
<div class="t" style="left:331px;top:262px;font-size:12.5px" aria-label="0%">0%</div>
<div style="left:277px;top:300px;width:32px;height:32px;background:#fff"></div>
<div style="left:278px;top:301px;width:30px;height:30px;background:#fff;border:1px solid #000"></div>
<div style="left:280px;top:303px;width:26px;height:26px;background:#fff;border:1px solid #000"></div>
<div style="left:333px;top:300px;width:32px;height:32px;background:#fff"></div>
<div style="left:334px;top:301px;width:30px;height:30px;background:#d4d0c8;border:1px solid #000;box-shadow:inset 1px 1px rgba(0,0,0,.55)"><svg class="a" style="left:0;top:0" width="28" height="28"><path d="M2.500 26L26 2.500" stroke="#cc0018" stroke-width="2.800"/></svg></div>
<div style="left:389px;top:300px;width:32px;height:32px;background:#fff"></div>
<div style="left:390px;top:301px;width:30px;height:30px;background:#d4d0c8;border:1px solid #000;box-shadow:inset 1px 1px rgba(0,0,0,.55)"><svg class="a" style="left:0;top:0" width="28" height="28"><path d="M2.500 26L26 2.500" stroke="#cc0018" stroke-width="2.800"/></svg></div>
<div style="left:445px;top:300px;width:32px;height:32px;background:#fff"></div>
<div style="left:446px;top:301px;width:30px;height:30px;background:#d4d0c8;border:1px solid #000;box-shadow:inset 1px 1px rgba(0,0,0,.55)"><svg class="a" style="left:0;top:0" width="28" height="28"><path d="M2.500 26L26 2.500" stroke="#cc0018" stroke-width="2.800"/></svg></div>
<div style="left:501px;top:300px;width:32px;height:32px;background:#fff"></div>
<div style="left:502px;top:301px;width:30px;height:30px;background:#d4d0c8;border:1px solid #000;box-shadow:inset 1px 1px rgba(0,0,0,.55)"><svg class="a" style="left:0;top:0" width="28" height="28"><path d="M2.500 26L26 2.500" stroke="#cc0018" stroke-width="2.800"/></svg></div>
<svg class="a" style="left:278px;top:311px" width="13" height="13"><polygon points="6.6,2.8 7.8,5.6 10.8,5.8 8.5,7.8 9.2,10.8 6.6,9.2 4.0,10.8 4.700,7.8 2.4,5.8 5.400,5.6" fill="#e8222a"/></svg>
<svg class="a" style="left:294px;top:308px" width="14" height="14"><polygon points="7.4,2.1 8.6,5.0 11.7,5.2 9.3,7.2 10.0,10.2 7.4,8.6 4.8,10.2 5.500,7.2 3.1,5.2 6.2,5.0" fill="#cfd82a" stroke="#a8d0a8" stroke-width=".5"/></svg>
<svg class="a" style="left:270px;top:332px" width="270" height="32" viewBox="270 332 270 32" fill="none"><path d="M286.500 340.500h-6v20h11v-10h13" stroke="#808080"/><path d="M297 340.500h6" stroke="#808080"/><path d="M302 337.500l3.500 3-3.500 3z" fill="#808080"/><rect x="286.500" y="335.500" width="10" height="10" fill="#fff" stroke="#808080"/><path d="M287 340.500h9" stroke="#f00" stroke-width="1"/><path d="M338.500 345v15.500h11v-10h13" stroke="#808080"/><path d="M343 340.500h17" stroke="#808080"/><path d="M359 337.500l3.500 3-3.500 3z" fill="#808080"/><rect x="333.500" y="335.500" width="10" height="10" fill="#fff" stroke="#808080"/><path d="M338.500 345v-4.500h4.500" stroke="#f00" stroke-width="1.200"/><path d="M415 340.500h-22.500v20h11v-5" stroke="#808080"/><path d="M408 350.500h8" stroke="#808080"/><path d="M413 337.500l3.500 3-3.500 3z" fill="#808080"/><rect x="398.500" y="345.500" width="10" height="10" fill="#fff" stroke="#808080"/><path d="M403.500 355v-4.500h4.500" stroke="#f00" stroke-width="1.200"/><path d="M472 340.500h-22.500v20h11v-10h3" stroke="#808080"/><path d="M470 337.500l3.500 3-3.500 3z" fill="#808080"/><rect x="463.500" y="345.500" width="10" height="10" fill="#fff" stroke="#808080"/><path d="M464 350.500h6" stroke="#f00" stroke-width="1.200"/><path d="M519.500 340.500h-14v20h11v-10h13" stroke="#808080"/><rect x="519.500" y="335.500" width="10" height="10" fill="#fff" stroke="#808080"/><path d="M521 340.500h6" stroke="#f00" stroke-width="1.200"/><path d="M525 337.500l3.500 3-3.500 3z" fill="#f00"/></svg>
<div class="sunk" style="left:278px;top:380px;width:256px;height:179px;"></div>
<div style="left:280px;top:398px;width:237px;height:16px;background:#0a246a"></div>
<div class="t" style="left:284px;top:384px;" aria-label="无">无</div>
<div class="t" style="left:284px;top:400px;color:#fff" aria-label="原稿">原稿</div>
<div class="t" style="left:284px;top:416px;" aria-label="小池">小池</div>
<div class="t" style="left:284px;top:432px;" aria-label="图案1">图案1</div>
<div class="chk" style="left:517px;top:382px;width:16px;height:175px;"></div>
<div class="sbtn" style="left:517px;top:382px;width:16px;height:16px;"></div>
<svg class="a" style="left:521px;top:388px" width="7" height="4" shape-rendering="crispEdges"><path d="M0 3h7v1h-7zM1 2h5v1h-5zM2 1h3v1h-3zM3 0h1v1h-1z" fill="#808080"/></svg>
<div class="sbtn" style="left:517px;top:541px;width:16px;height:16px;"></div>
<svg class="a" style="left:521px;top:547px" width="7" height="4" shape-rendering="crispEdges"><path d="M0 0h7v1h-7zM1 1h5v1h-5zM2 2h3v1h-3zM3 3h1v1h-1z" fill="#808080"/></svg>
<div class="grp" style="left:546px;top:299px;width:177px;height:72px;"></div>
<div class="face" style="left:556px;top:294px;width:33px;height:12px;"></div>
<div class="t" style="left:560px;top:294px;" aria-label="翻转">翻转</div>
<div class="sunk" style="left:563px;top:313px;width:13px;height:13px;"></div>
<div class="t" style="left:581px;top:314px;" aria-label="横向翻转(F)">横向翻转(<u>F</u>)</div>
<div class="sunk" style="left:563px;top:343px;width:13px;height:13px;"></div>
<div class="t" style="left:581px;top:344px;" aria-label="纵向翻转(C)">纵向翻转(<u>C</u>)</div>
<svg class="a" style="left:650px;top:310px" width="32" height="50" viewBox="650 310 32 50"><path d="M652 320.500h27" stroke="#000" stroke-width="1" stroke-dasharray="1 1"/><path d="M656.500 315.500v10.500l5-5.300z" fill="#c4c4c4" stroke="#a8a8a8" stroke-width="1"/><path d="M674.500 315.500v10.500l-5-5.300z" fill="#808080" stroke="#111" stroke-width="1"/><path d="M659 316.500c2-1.600 5-1.600 8-.5" stroke="#000" stroke-dasharray="1 1"/><path d="M667 313.500l3 3h-3.500z" fill="#000"/><path d="M653 350.500h25" stroke="#000" stroke-width="1" stroke-dasharray="1 1"/><path d="M661 343.500h11l-5.500 5.300z" fill="#808080" stroke="#333" stroke-width="1"/><path d="M661.500 357.500h10l-5-5z" fill="#c4c4c4" stroke="#a8a8a8" stroke-width="1"/><path d="M659.500 356c-1.800-3-1.800-6-.5-9" stroke="#000" stroke-dasharray="1 1"/><path d="M657 347.500l3-3.300v3.500z" fill="#000"/></svg>
<div class="grp" style="left:546px;top:389px;width:177px;height:86px;"></div>
<div class="face" style="left:556px;top:384px;width:33px;height:12px;"></div>
<div class="t" style="left:560px;top:384px;" aria-label="适合">适合</div>
<svg class="a" style="left:563px;top:400px" width="14" height="14" viewBox="-7 -7 14 14"><circle r="5.500" fill="#fff"/><path d="M-4.200 4.200A5.900 5.900 0 0 1 4.200 -4.200" fill="none" stroke="#808080" stroke-width="1"/><path d="M-3.500 3.500A4.900 4.900 0 0 1 3.500 -3.500" fill="none" stroke="#404040" stroke-width="1"/><path d="M4.200 -4.200A5.900 5.900 0 0 1 -4.200 4.200" fill="none" stroke="#fff" stroke-width="1"/><path d="M3.500 -3.500A4.900 4.900 0 0 1 -3.500 3.500" fill="none" stroke="#d4d0c8" stroke-width="1"/><circle r="2" fill="#000"/></svg>
<div class="t" style="left:581px;top:401px;" aria-label="伸展以适合(T)">伸展以适合(<u>T</u>)</div>
<svg class="a" style="left:563px;top:425px" width="14" height="14" viewBox="-7 -7 14 14"><circle r="5.500" fill="#fff"/><path d="M-4.200 4.200A5.900 5.900 0 0 1 4.200 -4.200" fill="none" stroke="#808080" stroke-width="1"/><path d="M-3.500 3.500A4.900 4.900 0 0 1 3.500 -3.500" fill="none" stroke="#404040" stroke-width="1"/><path d="M4.200 -4.200A5.900 5.900 0 0 1 -4.200 4.200" fill="none" stroke="#fff" stroke-width="1"/><path d="M3.500 -3.500A4.900 4.900 0 0 1 -3.500 3.500" fill="none" stroke="#d4d0c8" stroke-width="1"/></svg>
<div class="t" style="left:581px;top:426px;" aria-label="添加间距以适合(A)">添加间距以适合(<u>A</u>)</div>
<svg class="a" style="left:563px;top:450px" width="14" height="14" viewBox="-7 -7 14 14"><circle r="5.500" fill="#fff"/><path d="M-4.200 4.200A5.900 5.900 0 0 1 4.200 -4.200" fill="none" stroke="#808080" stroke-width="1"/><path d="M-3.500 3.500A4.900 4.900 0 0 1 3.500 -3.500" fill="none" stroke="#404040" stroke-width="1"/><path d="M4.200 -4.200A5.900 5.900 0 0 1 -4.200 4.200" fill="none" stroke="#fff" stroke-width="1"/><path d="M3.500 -3.500A4.900 4.900 0 0 1 -3.500 3.500" fill="none" stroke="#d4d0c8" stroke-width="1"/></svg>
<div class="t" style="left:581px;top:451px;" aria-label="近似路径(R)">近似路径(<u>R</u>)</div>
<div class="grp" style="left:546px;top:494px;width:177px;height:75px;"></div>
<div class="face" style="left:556px;top:489px;width:33px;height:12px;"></div>
<div class="t" style="left:560px;top:489px;" aria-label="着色">着色</div>
<div class="t" style="left:562px;top:509px;" aria-label="方法(M):">方法(<u>M</u>):</div>
<div class="sunk" style="left:613px;top:505px;width:93px;height:22px;"></div>
<div class="btn" style="left:688px;top:507px;width:16px;height:18px;"></div>
<svg class="a" style="left:692px;top:515px" width="7" height="4" shape-rendering="crispEdges"><path d="M0 0h7v1h-7zM1 1h5v1h-5zM2 2h3v1h-3zM3 3h1v1h-1z" fill="#000"/></svg>
<div class="t" style="left:617px;top:510px;" aria-label="无">无</div>
<div class="t" style="left:581px;top:541px;" aria-label="主色:">主色:</div>
<svg class="a" style="left:617px;top:537px" width="20" height="20" viewBox="617 537 20 20"><path d="M619.500 555.500l.5-2.500 8.500-8.500 2 2-8.500 8.500z" fill="#f4f4f4" stroke="#333" stroke-width=".9"/><path d="M627 543.500l4.500 4.500" stroke="#222" stroke-width="2.200"/><path d="M629.500 545.500l3.500-4c1-1 2.500.5 1.500 1.500z" fill="#222" stroke="#222" stroke-width="1.600"/></svg>
<div style="left:641px;top:535px;width:28px;height:24px;background:#ed1c24;border:2px solid #000;outline:1px solid #fff"></div>
<svg class="a" style="left:683px;top:536px" width="20" height="22" viewBox="683 536 20 22"><path d="M692.500 541a5 5 0 0 1 3 9l-.5 3h-5l-.5-3a5 5 0 0 1 3-9z" fill="#fff" stroke="#8a8a8a" stroke-width="1.200"/><path d="M690.300 553.500h4.400v2.500h-4.400z" fill="#8a8a8a"/><path d="M692.500 537v2M686.500 539.500l1.500 1.500M698.500 539.500l-1.500 1.500M684.500 545.500h2M698.500 545.500h2" stroke="#909090" stroke-width="1.200"/></svg>
<!-- sec_taskbar -->
<div class="face" style="left:0px;top:738px;width:1024px;height:30px;"></div>
<div class="face" style="left:0px;top:738px;width:1024px;height:2px;"></div>
<div style="left:0px;top:740px;width:1024px;height:1px;background:#fff"></div>
<div class="btn" style="left:2px;top:742px;width:47px;height:22px;"></div>
<svg class="a" style="left:4px;top:744px" width="17" height="16" viewBox="0 0 17 16"><path d="M2.500 1.500c2-1 4-1 5.500 0l-1.200 5c-1.500-1-3.500-1-5.500 0z" fill="#e85a1c"/><path d="M9 2c1.500 1 3.500 1 5.500 0l-1.200 5c-2 1-4 1-5.500 0z" fill="#6ab820"/><path d="M1 8c2-1 4-1 5.500 0l-1.200 5c-1.500-1-3.500-1-5.500 0z" fill="#3a74d8"/><path d="M7.500 8.500c1.500 1 3.500 1 5.500 0l-1.200 5c-2 1-4 1-5.500 0z" fill="#f4c418"/></svg>
<div class="t" style="left:22px;top:746px;letter-spacing:.3px" aria-label="开始">开始</div>
<svg class="a" style="left:56px;top:745px" width="64" height="18" viewBox="56 745 64 18"><circle cx="64" cy="753.300" r="6.200" fill="#f4f4f4"/><path d="M57.800 753.300a6.200 6.200 0 0 1 6.200-6.200" fill="none" stroke="#f0561c" stroke-width="2.600"/><path d="M64 747.100a6.200 6.200 0 0 1 6.200 6.200" fill="none" stroke="#5cb82c" stroke-width="2.600"/><path d="M70.200 753.300a6.200 6.200 0 0 1-6.200 6.200" fill="none" stroke="#f4c020" stroke-width="2.600"/><path d="M64 759.500a6.200 6.200 0 0 1-6.200-6.200" fill="none" stroke="#2a5ed8" stroke-width="2.600"/><path d="M61.800 750v6.600l5.400-3.300z" fill="#111"/><rect x="80.500" y="747.500" width="13" height="13" rx="2.500" fill="#2a7ae8" stroke="#1a52b0" stroke-width="1"/><path d="M83.500 750h6.500v7.500h-6.500z" fill="#f4f0d8"/><path d="M85 756l4.500-4.500M86 751.500h3.500v3.500" stroke="#1a3a90" stroke-width="1.400" fill="none"/><circle cx="93.500" cy="751" r="1.300" fill="#e8401c"/><text x="103" y="761" font-family="Liberation Sans" font-weight="bold" font-size="19" fill="#2a8ae8" stroke="#2a8ae8" stroke-width=".6">e</text><ellipse cx="110.500" cy="753" rx="8.500" ry="2.800" transform="rotate(-28 110.500 753)" fill="none" stroke="#4aa8f4" stroke-width="1.300"/></svg>
<div class="t" style="left:131px;top:743px;font-size:12.5px;font-weight:bold;letter-spacing:-1px">»</div>
<div style="left:143px;top:743px;width:160px;height:22px;background:conic-gradient(#fff 25%,#d4d0c8 0 50%,#fff 0 75%,#d4d0c8 0) 0 0/2px 2px;box-shadow:inset 1px 1px #404040,inset -1px -1px #fff,inset 2px 2px #808080,inset -2px -2px #d4d0c8"></div>
<div style="left:148px;top:746px;width:16px;height:16px;background:linear-gradient(135deg,#f8a018,#c85a08);border:1px solid #a04808;color:#fff8c0;font-weight:bold;font-size:10px;line-height:14px;text-align:center;letter-spacing:-.5px">Ai</div>
<div class="t" style="left:168px;top:747px;" aria-label="未标题-1* @ 96% (CM...">未标题<span class="m">-1* @ 96% (CM...</span></div>
<div style="left:978px;top:743px;width:2px;height:22px;background:linear-gradient(90deg,#808080 50%,#fff 0)"></div>
<div style="left:985px;top:742px;width:38px;height:24px;box-shadow:inset 1px 1px #808080,inset -1px -1px #fff"></div>
<div class="t" style="left:989px;top:746px;font-size:14px;font-weight:bold;letter-spacing:-1px">«</div>
<svg class="a" style="left:890px;top:744px" width="134" height="22" viewBox="890 744 134 22"><rect x="957.500" y="752.500" width="16" height="8" rx="1" fill="#fff" stroke="#000" stroke-width="1.200"/><path d="M959 755.500h13M959 758h13" stroke="#000" stroke-width="1.400" stroke-dasharray="1 1"/><path d="M961 752c0-2 .5-3.500 2-3.500s2 1.500 3.500 1.500 1.500-1 3-1 2 1 2 3" fill="none" stroke="#000" stroke-width="1"/><rect x="1005" y="749" width="7" height="6" fill="#3a3a7a"/><path d="M1004 756h9v2h-9z" fill="#6a8ad8"/><ellipse cx="1008.500" cy="759.500" rx="3.500" ry="1.500" fill="#dde" stroke="#4a5aa8" stroke-width=".8"/><path d="M1014 748c1.500 1.500 1.500 4.500 0 6M1016.500 746.500c2.500 2.500 2.500 7 0 9.500" fill="none" stroke="#888" stroke-width=".9"/></svg>
</body></html>
